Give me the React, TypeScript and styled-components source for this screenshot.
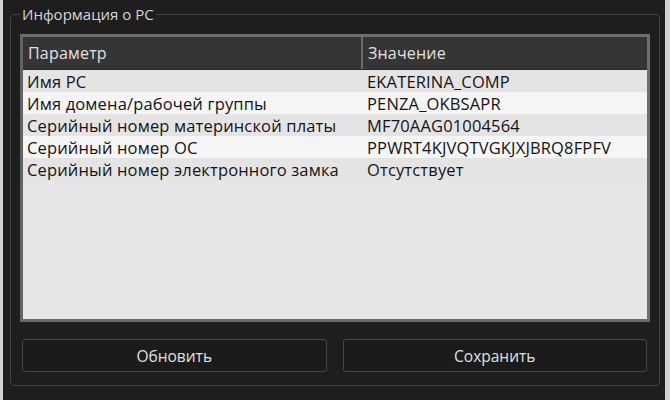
import React from "react";
import styled, { createGlobalStyle } from "styled-components";

const GlobalStyle = createGlobalStyle`
  html, body {
    margin: 0;
    padding: 0;
    background: #d2d2d2;
  }
  body {
    font-family: "Open Sans", "DejaVu Sans", sans-serif;
  }
`;

const Window = styled.div`
  box-sizing: border-box;
  margin-left: 3px;
  width: 662px;
  height: 400px;
  background: #1e1e1e;
  padding: 6px 5px 0 7px;
`;

const Group = styled.fieldset`
  box-sizing: border-box;
  margin: 0;
  height: 380px;
  border: 1px solid #444444;
  border-radius: 4px;
  padding: 11px 9px 0 9px;
  display: flex;
  flex-direction: column;
`;

const Legend = styled.legend`
  padding: 0 2px;
  margin-left: 0;
  color: #d6d6d6;
  font-size: 15px;
  line-height: 17px;
`;

const Table = styled.div`
  box-sizing: border-box;
  height: 288px;
  border: 3px solid #6e6e6e;
  border-left-color: #636363;
  border-bottom-color: #6a6a6a;
  background: #e6e6e6;
  display: flex;
  flex-direction: column;
`;

const HeaderRow = styled.div`
  display: grid;
  grid-template-columns: 338px 2px 1fr;
  height: 32px;
  background: #353535;
  border-bottom: 1px solid #2a2a2a;
`;

const HeaderCell = styled.div`
  display: flex;
  align-items: center;
  padding-left: 5px;
  color: #e2e2e2;
  font-size: 16px;
  letter-spacing: 0.2px;
`;

const Divider = styled.div`
  background: #6a6a6a;
`;

const Row = styled.div<{ $alt: boolean }>`
  box-sizing: border-box;
  display: grid;
  grid-template-columns: 340px 1fr;
  height: 22px;
  padding-top: 2px;
  background: ${(p) => (p.$alt ? "#f5f5f5" : "#e4e4e4")};
  color: #141414;
  font-size: 16.5px;
  line-height: 20px;
  letter-spacing: 0.15px;
`;

const Cell = styled.div`
  padding-left: 4px;
  white-space: nowrap;
`;

const Buttons = styled.div`
  display: grid;
  grid-template-columns: 1fr 1fr;
  gap: 16px;
  margin-top: 17px;
  padding: 0 3px 0 2px;
`;

const Button = styled.button`
  box-sizing: border-box;
  height: 33px;
  background: #1b1b1b;
  border: 1px solid #474747;
  border-radius: 3px;
  color: #e0e0e0;
  font-family: "Open Sans", "DejaVu Sans", sans-serif;
  font-size: 15.5px;
  cursor: pointer;
`;

const rows: [string, string][] = [
  ["Имя PC", "EKATERINA_COMP"],
  ["Имя домена/рабочей группы", "PENZA_OKBSAPR"],
  ["Серийный номер материнской платы", "MF70AAG01004564"],
  ["Серийный номер ОС", "PPWRT4KJVQTVGKJXJBRQ8FPFV"],
  ["Серийный номер электронного замка", "Отсутствует"],
];

const App = () => {
  return (
    <>
      <GlobalStyle />
      <Window>
        <Group>
          <Legend>Информация о РС</Legend>
          <Table>
            <HeaderRow>
              <HeaderCell>Параметр</HeaderCell>
              <Divider />
              <HeaderCell>Значение</HeaderCell>
            </HeaderRow>
            {rows.map(([name, value], index) => (
              <Row key={index} $alt={index % 2 === 1}>
                <Cell>{name}</Cell>
                <Cell>{value}</Cell>
              </Row>
            ))}
          </Table>
          <Buttons>
            <Button>Обновить</Button>
            <Button>Сохранить</Button>
          </Buttons>
        </Group>
      </Window>
    </>
  );
};

export default App;
